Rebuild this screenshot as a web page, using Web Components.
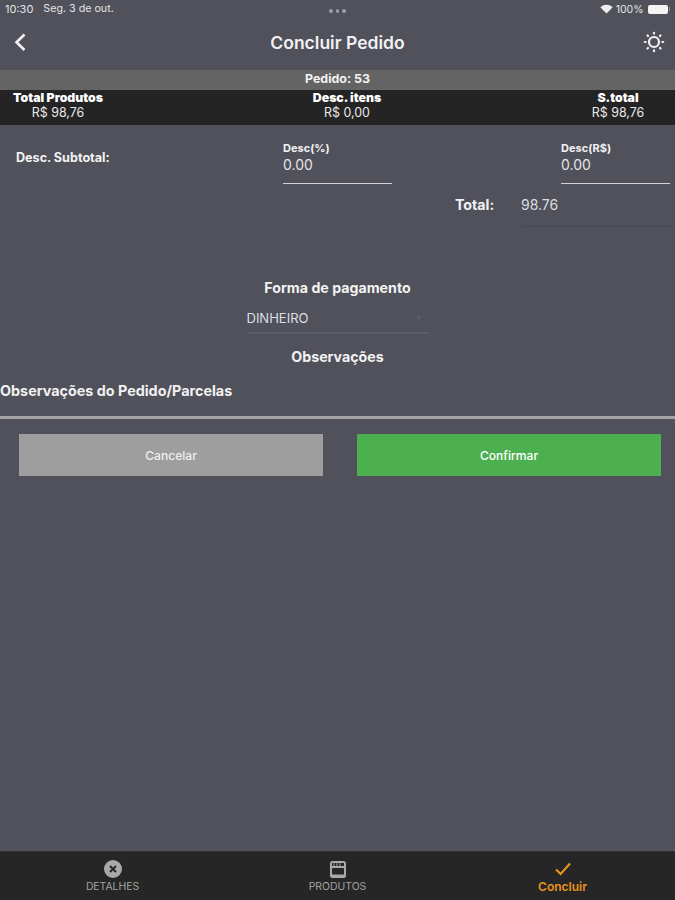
<!DOCTYPE html>
<html lang="pt"><head><meta charset="utf-8"><title>Concluir Pedido</title>
<style>
html,body{margin:0;padding:0;background:#50515b}
body{width:675px;height:900px;overflow:hidden;font-family:Inter,"Liberation Sans",sans-serif;color:#fff}
app-screen{height:900px}
</style></head><body>
<app-screen>
  <status-bar></status-bar>
  <nav-header title="Concluir Pedido"></nav-header>
  <order-summary></order-summary>
  <discount-form></discount-form>
  <payment-form></payment-form>
  <action-buttons></action-buttons>
  <tab-bar slot="tabs"></tab-bar>
</app-screen>
<script>
function def(name, html, init){
  customElements.define(name, class extends HTMLElement{
    constructor(){super();this.attachShadow({mode:'open'}).innerHTML=html;}
    connectedCallback(){ if(init) init(this); }
  });
}
def('app-screen',`<style>:host{display:flex;flex-direction:column;background:#50515b}
.main{flex:1;display:flex;flex-direction:column}</style>
<div class="main"><slot></slot></div><slot name="tabs"></slot>`);

def('status-bar',`<style>:host{display:flex;align-items:center;height:18px;padding:0 5px;color:#e4e4e6}
.l{display:flex;gap:10px;flex:1;font-size:11px}.l span+span{font-size:10.7px}
.dots{display:flex;gap:3px;flex:1;justify-content:center;padding-top:4px}
.dots i{width:3.5px;height:3.5px;border-radius:50%;background:#9b9ca3}
.r{flex:1;display:flex;justify-content:flex-end;align-items:center;gap:3px;font-size:10.5px}
.bat{width:20px;height:9px;background:#f4f4f4;border-radius:2px;margin-left:1px}
.tip{width:1.5px;height:4px;background:#8e8e94;margin-left:-2px}</style>
<div class="l"><span>10:30</span><span>Seg. 3 de out.</span></div>
<div class="dots"><i></i><i></i><i></i></div>
<div class="r"><svg width="13" height="10" viewBox="0 0 13 10"><path d="M6.5 9.6 0.3 3.2C3.8-.1 9.2-.1 12.7 3.2Z" fill="#eee"/></svg><span>100%</span><span class="bat"></span><span class="tip"></span></div>`);

def('nav-header',`<style>:host{display:flex;align-items:center;justify-content:space-between;height:52px;padding:0 9px 4px 13px;box-sizing:border-box}
h1{margin:0 4px 0 0;font-size:17.5px;font-weight:600;color:#f1f1f3}
svg{display:block}.s{width:24px}</style>
<svg class="s" width="24" height="24" viewBox="0 0 24 24"><path d="M11.5 4.5 3.5 12.2 11.5 20" fill="none" stroke="#f2f2f4" stroke-width="2.6"/></svg>
<h1 id="t"></h1>
<svg class="s" width="24" height="24" viewBox="0 0 24 24" fill="none" stroke="#f2f2f4"><circle cx="12" cy="12" r="5" stroke-width="2.2"/><path stroke-width="2.2" stroke-linecap="round" d="M12 2.8v.8M12 20.4v.8M2.8 12h.8M20.4 12h.8M5.5 5.5l.5.5M18 18l.5.5M5.5 18.5l.5-.5M18 6l.5-.5"/></svg>`,
e=>{e.shadowRoot.getElementById('t').textContent=e.getAttribute('title');});

def('order-summary',`<style>:host{display:block;font-weight:700}
.bar{height:20px;background:#646464;display:flex;align-items:center;justify-content:center;color:#f2f2f2;font-size:12.4px;padding-bottom:4px;box-sizing:border-box}
.row{height:35px;background:#242424;display:grid;grid-template-columns:116px 115px 232px 98px 114px;align-items:start;text-align:center}
.col{display:flex;flex-direction:column;gap:1px;line-height:14px;align-items:center;font-size:12.3px;padding-top:1px}
.c2{grid-column:3}.c3{grid-column:5}
.col span{font-weight:400;color:#e9e9e9;font-size:12.4px}</style>
<div class="bar">Pedido: 53</div>
<div class="row">
<div class="col"><b>Total Produtos</b><span>R$ 98,76</span></div>
<div class="col c2"><b>Desc. itens</b><span>R$ 0,00</span></div>
<div class="col c3"><b>S.total</b><span>R$ 98,76</span></div>
</div>`);

def('discount-form',`<style>:host{display:block;height:151px;box-sizing:border-box}
.grid{display:grid;grid-template-columns:283px 109px 169px 109px;padding-top:17px}
.lab{font-size:12.6px;font-weight:700;padding:9px 0 0 16px;color:#f2f2f2;line-height:14px}
.f{height:42px;border-bottom:1.5px solid #d4d4d8;box-sizing:border-box;display:flex;flex-direction:column}
.f b{font-size:11px;font-weight:700;line-height:12px;color:#f2f2f2}
.f span{font-size:14px;line-height:20px;color:#e4e4e6;margin-top:1px}
.tot{display:flex;margin:1px 0 0 455px}
b.t{width:66px;padding-top:11px;font-size:14.2px;line-height:17px;color:#f2f2f2;font-weight:700}
.v{flex:1;padding-top:11px;height:42px;box-sizing:border-box;font-size:14px;line-height:17px;color:#dcdce0;border-bottom:1px solid #484951}</style>
<div class="grid"><div class="lab">Desc. Subtotal:</div>
<div class="f"><b>Desc(%)</b><span>0.00</span></div><div></div>
<div class="f"><b>Desc(R$)</b><span>0.00</span></div></div>
<div class="tot"><b class="t">Total:</b><span class="v">98.76</span></div>`);

def('payment-form',`<style>:host{display:flex;flex-direction:column;align-items:center;font-weight:700}
h2{margin:0;font-size:14.2px;line-height:17px;color:#f2f2f2;font-weight:700}
.sel{width:182px;height:30px;margin-top:8px;border-bottom:2px solid #5c5d66;box-sizing:border-box;display:flex;align-items:center;justify-content:space-between;font-weight:400;font-size:13px;color:#dedee2}
.sel i{width:0;height:0;border:3px solid transparent;border-top:4px solid #5e5f68;border-bottom:0;margin-right:7px}
.obs{align-self:flex-start;font-size:14.35px;line-height:18px;margin-top:16px;color:#f2f2f2}
.rule{align-self:stretch;height:3px;background:#a3a3a5;margin-top:16px}</style>
<h2 style="margin-top:3px">Forma de pagamento</h2>
<div class="sel"><span>DINHEIRO</span><i></i></div>
<h2 style="margin-top:14px;padding-bottom:1px">Observações</h2>
<div class="obs">Observações do Pedido/Parcelas</div>
<div class="rule"></div>`);

def('action-buttons',`<style>:host{display:flex;justify-content:space-between;padding:15px 14px 0 19px;flex:1}
button{width:304px;height:42px;border:0;border-radius:0;font:500 12.1px Inter,"Liberation Sans",sans-serif;color:#f0f0f0;padding:0}
.c{background:#9e9e9e}.o{background:#4caf50;color:#fff}</style>
<button class="c">Cancelar</button><button class="o">Confirmar</button>`);

def('tab-bar',`<style>:host{display:grid;grid-template-columns:225px 225px 225px;height:49px;background:#262626;border-top:1px solid #303036;box-sizing:border-box}
.t{display:flex;flex-direction:column;align-items:center;padding-top:7px;font-size:10.4px;color:#a2a2a2;line-height:12px}
svg{display:block;margin-bottom:2px;height:20px}
.a{color:#e8951c;font-weight:600;font-size:12px}</style>
<div class="t"><svg width="20" height="20" viewBox="0 0 20 20"><circle cx="10" cy="10" r="9" fill="#a9a9a9"/><path d="M7 7l6 6M13 7l-6 6" stroke="#262626" stroke-width="2"/></svg>DETALHES</div>
<div class="t"><svg width="20" height="20" viewBox="0 0 20 20"><rect x="2" y="2" width="16" height="17" rx="2.5" fill="#a9a9a9"/><rect x="4" y="4" width="12" height="3" fill="#262626"/><rect x="4" y="9" width="12" height="6.5" fill="#262626"/><path d="M6 4.2v3M9 4.2v3M12 4.2v3" stroke="#a9a9a9"/></svg>PRODUTOS</div>
<div class="t a"><svg width="20" height="20" viewBox="0 0 20 20"><path d="M3 10.5 7.6 15 17 4.5" fill="none" stroke="#e8951c" stroke-width="2.2"/></svg>Concluir</div>`);
</script>
</body></html>
